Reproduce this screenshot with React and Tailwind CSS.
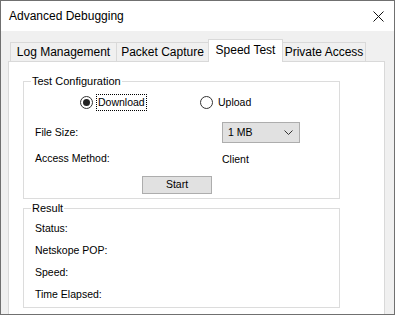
import React from 'react';

const tabs = [
  { label: 'Log Management', w: 'w-[107px]' },
  { label: 'Packet Capture', w: 'w-[93px]' },
  { label: 'Speed Test', w: 'w-[75px]', active: true },
  { label: 'Private Access', w: 'w-[84px]' },
];

function Radio({ checked, focused, label, className }) {
  return (
    <div className={`flex items-center gap-[3px] ${className}`}>
      <span className="w-[13px] h-[13px] rounded-full border border-[#333] bg-white flex items-center justify-center">
        {checked && <span className="w-[7px] h-[7px] rounded-full bg-[#222]" />}
      </span>
      <span
        className={`h-[17px] flex items-center px-[1px] leading-none ${
          focused ? 'border border-dotted border-black' : 'border border-transparent'
        }`}
      >
        {label}
      </span>
    </div>
  );
}

export default function App() {
  return (
    <div
      className="w-[395px] h-[315px] border border-[#707070] bg-[#f0f0f0] flex flex-col text-black"
      style={{ fontFamily: '"Liberation Sans", Arial, sans-serif' }}
    >
      <div className="h-[30px] bg-white flex items-center justify-between pl-[8px] pr-[10px] text-[12px]">
        <span>Advanced Debugging</span>
        <svg width="11" height="11" viewBox="0 0 11 11" className="mt-[1px]">
          <path d="M0.5 0.5 L10.5 10.5 M10.5 0.5 L0.5 10.5" stroke="#111" strokeWidth="1" />
        </svg>
      </div>

      <div className="flex-1 flex flex-col pl-[7px] pr-[9px] pt-[8px]">
        <div className="flex items-end h-[22px] pl-[2px] text-[12px] relative z-10">
          {tabs.map((t, i) => (
            <div
              key={t.label}
              className={`${t.w} flex items-center justify-center border-t border-l border-r border-[#d9d9d9] ${
                i > 0 ? '-ml-[1px]' : ''
              } ${
                t.active
                  ? 'h-[23px] -mb-[1px] bg-white pb-[3px] z-10'
                  : 'h-[19px] bg-[#f0f0f0]'
              }`}
            >
              {t.label}
            </div>
          ))}
        </div>

        <div className="flex-1 bg-white border-t border-l border-r border-[#d9d9d9] pl-[14px] text-[10.5px]">
          <fieldset className="mt-[12px] w-[317px] border border-[#dcdcdc] pb-[4px]">
            <legend className="ml-[7px] px-[1px] leading-[14px] text-[11px]">Test Configuration</legend>
            <div className="flex items-center pt-[6px] h-[17px] box-content">
              <Radio checked focused label="Download" className="pl-[56px] w-[176px]" />
              <Radio label="Upload" />
            </div>
            <div className="flex items-center mt-[11px] h-[21px]">
              <span className="pl-[11px] w-[198px]">File Size:</span>
              <div className="w-[78px] h-[21px] bg-[#e1e1e1] border border-[#adadad] flex items-center justify-between pl-[5px] pr-[6px]">
                <span>1 MB</span>
                <svg width="9" height="5" viewBox="0 0 9 5">
                  <path d="M0.5 0.5 L4.5 4.5 L8.5 0.5" stroke="#333" strokeWidth="1" fill="none" />
                </svg>
              </div>
            </div>
            <div className="flex items-center mt-[7px] h-[18px]">
              <span className="pl-[11px] w-[198px]">Access Method:</span>
              <span className="pt-[2px]">Client</span>
            </div>
            <button className="ml-[118px] mt-[8px] w-[70px] h-[18px] bg-[#e1e1e1] border border-[#adadad] flex items-center justify-center">
              Start
            </button>
          </fieldset>

          <fieldset className="mt-[2px] w-[317px] border border-[#dcdcdc] pb-[1px]">
            <legend className="ml-[7px] px-[1px] leading-[14px] text-[11px]">Result</legend>
            <div className="pt-[3px] pl-[11px] flex flex-col">
              {['Status:', 'Netskope POP:', 'Speed:', 'Time Elapsed:'].map((l) => (
                <div key={l} className="h-[22px] flex items-center">
                  {l}
                </div>
              ))}
            </div>
          </fieldset>
        </div>
      </div>
    </div>
  );
}
